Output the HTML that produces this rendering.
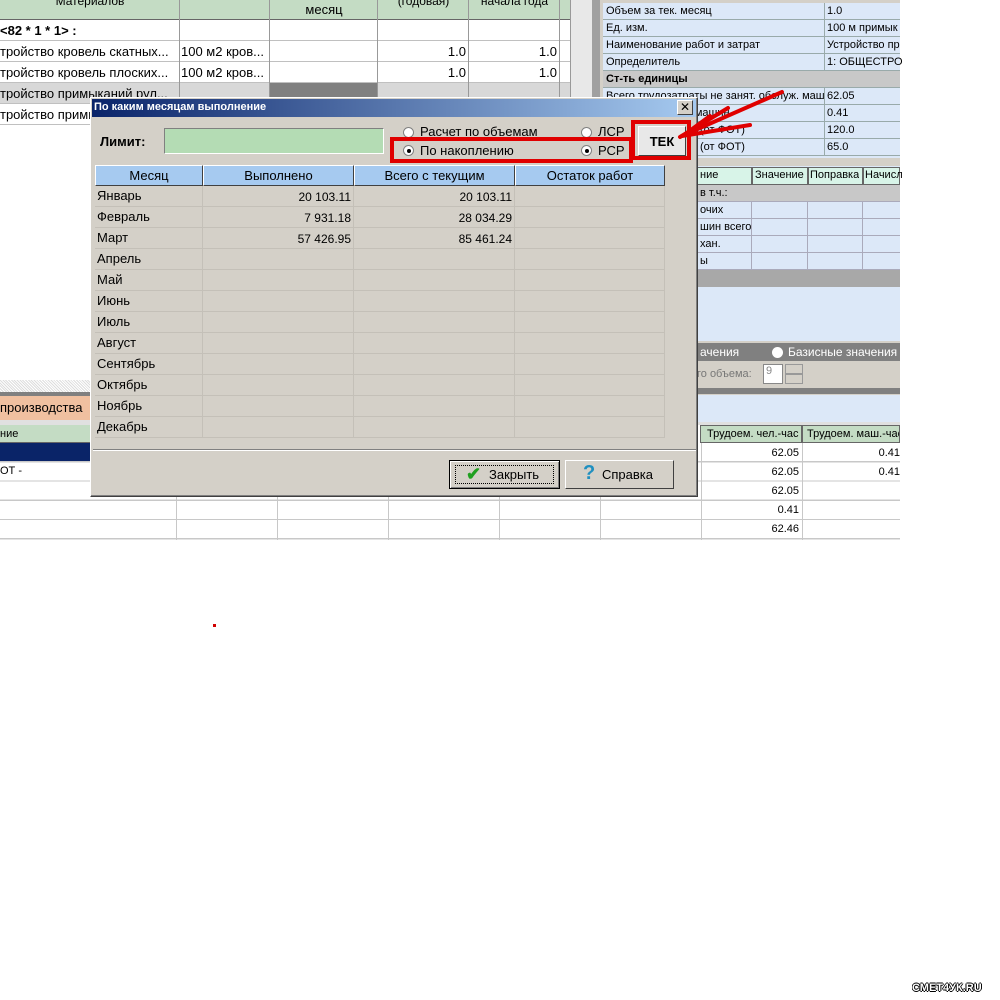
<!DOCTYPE html>
<html><head><meta charset="utf-8"><style>
*{margin:0;padding:0;box-sizing:border-box}
body{width:1000px;height:1000px;background:#fff;position:relative;overflow:hidden;font-family:"Liberation Sans",sans-serif;font-size:12px;color:#000}
.a{position:absolute;white-space:nowrap;overflow:hidden}
.r{text-align:right}
.c{text-align:center}
</style></head><body>

<div class="a" style="left:0;top:0;width:570px;height:20px;background:#c4dcc4;border-bottom:1px solid #666"></div>
<div class="a c" style="left:0;top:-6px;width:180px;">Материалов</div>
<div class="a c" style="left:270px;top:2px;width:108px;font-size:13px">месяц</div>
<div class="a c" style="left:378px;top:-6px;width:91px;">(годовая)</div>
<div class="a c" style="left:469px;top:-6px;width:91px;">начала года</div>
<div class="a" style="left:0;top:83px;width:570px;height:21px;background:#d8d8d8"></div>
<div class="a" style="left:270px;top:83px;width:108px;height:21px;background:#808080"></div>
<div class="a" style="left:0;top:20px;width:570px;height:105px;
background:repeating-linear-gradient(to bottom,transparent 0 20px,#c0c0c0 20px 21px)"></div>
<div class="a" style="left:179px;top:0;width:1px;height:125px;background:#999"></div>
<div class="a" style="left:269px;top:0;width:1px;height:125px;background:#999"></div>
<div class="a" style="left:377px;top:0;width:1px;height:125px;background:#999"></div>
<div class="a" style="left:468px;top:0;width:1px;height:125px;background:#999"></div>
<div class="a" style="left:559px;top:0;width:1px;height:125px;background:#999"></div>
<div class="a" style="left:0;top:23px;font-weight:bold;font-size:13px">&lt;82 * 1 * 1&gt; :</div>
<div class="a" style="left:0;top:44px;width:180px;font-size:13px">тройство кровель скатных...</div>
<div class="a" style="left:181px;top:44px;font-size:13px">100 м2 кров...</div>
<div class="a r" style="left:378px;top:44px;width:88px;font-size:13px">1.0</div>
<div class="a r" style="left:469px;top:44px;width:88px;font-size:13px">1.0</div>
<div class="a" style="left:0;top:65px;width:180px;font-size:13px">тройство кровель плоских...</div>
<div class="a" style="left:181px;top:65px;font-size:13px">100 м2 кров...</div>
<div class="a r" style="left:378px;top:65px;width:88px;font-size:13px">1.0</div>
<div class="a r" style="left:469px;top:65px;width:88px;font-size:13px">1.0</div>
<div class="a" style="left:0;top:86px;width:180px;font-size:13px">тройство примыканий рул...</div>
<div class="a" style="left:0;top:107px;width:180px;font-size:13px">тройство примыканий</div>
<div class="a" style="left:570px;top:0;width:30px;height:395px;background:#e8e8e8;border-left:1px solid #999"></div>
<div class="a" style="left:592px;top:0;width:8px;height:395px;background:#a0a0a0"></div>

<div class="a" style="left:600px;top:0;width:300px;height:395px;background:#d4d0c8"></div>
<div class="a" style="left:603px;top:3px;width:297px;height:155px;background:#dce8f8"></div>
<div class="a" style="left:603px;top:70px;width:297px;height:17px;background:#c8c8c8"></div>
<div class="a" style="left:603px;top:3px;width:297px;height:155px;background:repeating-linear-gradient(to bottom,transparent 0 16px,#9aa 16px 17px)"></div>
<div class="a" style="left:824px;top:3px;width:1px;height:67px;background:#9aa"></div>
<div class="a" style="left:824px;top:87px;width:1px;height:68px;background:#9aa"></div>
<div class="a" style="left:606px;top:5px;font-size:11px">Объем за тек. месяц</div><div class="a" style="left:827px;top:5px;font-size:11px">1.0</div>
<div class="a" style="left:606px;top:22px;font-size:11px">Ед. изм.</div><div class="a" style="left:827px;top:22px;font-size:11px">100 м примык</div>
<div class="a" style="left:606px;top:39px;font-size:11px">Наименование работ и затрат</div><div class="a" style="left:827px;top:39px;font-size:11px">Устройство пр</div>
<div class="a" style="left:606px;top:56px;font-size:11px">Определитель</div><div class="a" style="left:827px;top:56px;font-size:11px">1: ОБЩЕСТРО</div>
<div class="a" style="left:606px;top:73px;font-size:11px;font-weight:bold">Ст-ть единицы</div>
<div class="a" style="left:606px;top:90px;font-size:11px">Всего трудозатраты не занят. обслуж. маш</div><div class="a" style="left:827px;top:90px;font-size:11px">62.05</div>
<div class="a" style="left:606px;top:107px;font-size:11px">Затраты обслуж. машин</div><div class="a" style="left:827px;top:107px;font-size:11px">0.41</div>
<div class="a" style="left:700px;top:124px;font-size:11px">(от ФОТ)</div><div class="a" style="left:827px;top:124px;font-size:11px">120.0</div>
<div class="a" style="left:700px;top:141px;font-size:11px">(от ФОТ)</div><div class="a" style="left:827px;top:141px;font-size:11px">65.0</div>

<div class="a" style="left:697px;top:166px;width:203px;height:175px;background:#dce8f8"></div>
<div class="a" style="left:697px;top:167px;width:55px;height:18px;background:#d8f4e8;border:1px solid #666"></div>
<div class="a" style="left:752px;top:167px;width:56px;height:18px;background:#d8f4e8;border:1px solid #666"></div>
<div class="a" style="left:808px;top:167px;width:55px;height:18px;background:#d8f4e8;border:1px solid #666"></div>
<div class="a" style="left:863px;top:167px;width:37px;height:18px;background:#d8f4e8;border:1px solid #666"></div>
<div class="a" style="left:700px;top:169px;font-size:11px">ние</div>
<div class="a" style="left:755px;top:169px;font-size:11px">Значение</div>
<div class="a" style="left:810px;top:169px;font-size:11px">Поправка</div>
<div class="a" style="left:865px;top:169px;font-size:11px">Начисл</div>
<div class="a" style="left:697px;top:185px;width:203px;height:17px;background:#c8c8c8"></div>
<div class="a" style="left:697px;top:270px;width:203px;height:17px;background:#a8a8a8"></div>
<div class="a" style="left:697px;top:185px;width:203px;height:85px;background:repeating-linear-gradient(to bottom,transparent 0 16px,#aab 16px 17px)"></div>
<div class="a" style="left:751px;top:202px;width:1px;height:68px;background:#aab"></div>
<div class="a" style="left:807px;top:202px;width:1px;height:68px;background:#aab"></div>
<div class="a" style="left:862px;top:202px;width:1px;height:68px;background:#aab"></div>
<div class="a" style="left:700px;top:187px;font-size:11px">в т.ч.:</div>
<div class="a" style="left:700px;top:204px;font-size:11px">очих</div>
<div class="a" style="left:700px;top:221px;font-size:11px">шин всего</div>
<div class="a" style="left:700px;top:238px;font-size:11px">хан.</div>
<div class="a" style="left:700px;top:255px;font-size:11px">ы</div>
<div class="a" style="left:697px;top:343px;width:203px;height:18px;background:#808080"></div>
<div class="a" style="left:700px;top:345px;color:#fff;font-size:12px">ачения</div>
<div class="a" style="left:772px;top:347px;width:11px;height:11px;border-radius:50%;background:#fff"></div>
<div class="a" style="left:788px;top:345px;color:#fff;font-size:12px">Базисные значения</div>
<div class="a" style="left:697px;top:368px;color:#777;font-size:11px">го объема:</div>
<div class="a" style="left:763px;top:364px;width:20px;height:20px;background:#fff;border:1px solid #888;font-size:11px;color:#888;padding-left:2px">9</div>
<div class="a" style="left:785px;top:364px;width:18px;height:10px;background:#d4d0c8;border:1px solid #999"></div>
<div class="a" style="left:785px;top:374px;width:18px;height:10px;background:#d4d0c8;border:1px solid #999"></div>
<div class="a" style="left:600px;top:388px;width:300px;height:6px;background:#808080"></div>

<div class="a" style="left:0;top:380px;width:95px;height:12px;background:repeating-linear-gradient(45deg,#ddd 0 1px,#fff 1px 2px)"></div>
<div class="a" style="left:0;top:392px;width:95px;height:4px;background:#808080"></div>
<div class="a" style="left:0;top:396px;width:95px;height:24px;background:#f0c0a0;font-size:13px;padding-top:4px">производства</div>
<div class="a" style="left:0;top:420px;width:900px;height:5px;background:#e0e0e0"></div>
<div class="a" style="left:697px;top:395px;width:203px;height:27px;background:#dce8f8"></div>
<div class="a" style="left:0;top:425px;width:95px;height:18px;background:#c4dcc4;border-bottom:1px solid #666;font-size:11px;padding-top:3px">ние</div>
<div class="a" style="left:700px;top:425px;width:102px;height:18px;background:#c4dcc4;border:1px solid #666;font-size:11px;padding:2px 0 0 6px">Трудоем. чел.-час</div>
<div class="a" style="left:802px;top:425px;width:98px;height:18px;background:#c4dcc4;border:1px solid #666;font-size:11px;padding:2px 0 0 4px">Трудоем. маш.-час</div>
<div class="a" style="left:0;top:443px;width:95px;height:19px;background:#0a2468"></div>
<div class="a" style="left:0;top:465px;font-size:11px">ОТ -</div>
<div class="a" style="left:0;top:443px;width:900px;height:97px;background:repeating-linear-gradient(to bottom,transparent 0 18px,#c8c8c8 18px 19.3px)"></div>
<div class="a" style="left:176px;top:497px;width:1px;height:43px;background:#c8c8c8"></div>
<div class="a" style="left:277px;top:497px;width:1px;height:43px;background:#c8c8c8"></div>
<div class="a" style="left:388px;top:497px;width:1px;height:43px;background:#c8c8c8"></div>
<div class="a" style="left:499px;top:497px;width:1px;height:43px;background:#c8c8c8"></div>
<div class="a" style="left:600px;top:497px;width:1px;height:43px;background:#c8c8c8"></div>
<div class="a" style="left:701px;top:443px;width:1px;height:97px;background:#c8c8c8"></div>
<div class="a" style="left:802px;top:443px;width:1px;height:97px;background:#c8c8c8"></div>
<div class="a r" style="left:702px;top:447px;width:97px;font-size:11px">62.05</div>
<div class="a r" style="left:702px;top:466px;width:97px;font-size:11px">62.05</div>
<div class="a r" style="left:702px;top:485px;width:97px;font-size:11px">62.05</div>
<div class="a r" style="left:702px;top:504px;width:97px;font-size:11px">0.41</div>
<div class="a r" style="left:702px;top:523px;width:97px;font-size:11px">62.46</div>
<div class="a r" style="left:803px;top:447px;width:97px;font-size:11px">0.41</div>
<div class="a r" style="left:803px;top:466px;width:97px;font-size:11px">0.41</div>

<div class="a" style="left:90px;top:97px;width:608px;height:400px;background:#d4d0c8;border:1px solid;border-color:#fff #404040 #404040 #fff;box-shadow:inset -1px -1px #808080"></div>
<div class="a" style="left:92px;top:99px;width:604px;height:18px;background:linear-gradient(to right,#0a246a,#a6caf0);color:#fff;font-weight:bold;font-size:11px;padding:2px 0 0 2px">По каким месяцам выполнение</div>
<div class="a c" style="left:677px;top:100px;width:16px;height:15px;background:#d4d0c8;border:1px solid;border-color:#fff #404040 #404040 #fff;font-size:12px;line-height:12px">✕</div>
<div class="a" style="left:100px;top:134px;font-weight:bold;font-size:13px">Лимит:</div>
<div class="a" style="left:164px;top:128px;width:220px;height:26px;background:#b4dcb4;border:1px solid;border-color:#808080 #fff #fff #808080"></div>
<div class="a" style="left:403px;top:127px;width:11px;height:11px;border-radius:50%;background:#fff;border:1px solid #808080"></div>
<div class="a" style="left:420px;top:124px;font-size:13px;height:12px">Расчет по объемам</div>
<div class="a" style="left:581px;top:127px;width:11px;height:11px;border-radius:50%;background:#fff;border:1px solid #808080"></div>
<div class="a" style="left:598px;top:124px;font-size:13px;height:12px">ЛСР</div>
<div class="a" style="left:403px;top:145px;width:11px;height:11px;border-radius:50%;background:#fff;border:1px solid #808080"><div style="position:absolute;left:3px;top:3px;width:4px;height:4px;border-radius:50%;background:#000"></div></div>
<div class="a" style="left:420px;top:143px;font-size:13px">По накоплению</div>
<div class="a" style="left:581px;top:145px;width:11px;height:11px;border-radius:50%;background:#fff;border:1px solid #808080"><div style="position:absolute;left:3px;top:3px;width:4px;height:4px;border-radius:50%;background:#000"></div></div>
<div class="a" style="left:598px;top:143px;font-size:13px">РСР</div>
<div class="a c" style="left:638px;top:126px;width:48px;height:30px;background:#e8e8e8;border:1px solid;border-color:#fff #404040 #404040 #fff;font-weight:bold;font-size:13px;padding-top:7px">ТЕК</div>
<div class="a" style="left:390px;top:137px;width:243px;height:26px;border:4px solid #e00000"></div>
<div class="a" style="left:631px;top:120px;width:60px;height:40px;border:4px solid #e00000"></div>

<div class="a" style="left:94px;top:164px;width:572px;height:274px;background:#d4d0c8"></div>
<div class="a" style="left:95px;top:165px;width:570px;height:21px;background:#a6caf0"></div>
<div class="a c" style="left:95px;top:165px;width:108px;height:21px;border:1px solid;border-color:#fff #404040 #404040 #fff;font-size:13px;padding-top:2px">Месяц</div>
<div class="a c" style="left:203px;top:165px;width:151px;height:21px;border:1px solid;border-color:#fff #404040 #404040 #fff;font-size:13px;padding-top:2px">Выполнено</div>
<div class="a c" style="left:354px;top:165px;width:161px;height:21px;border:1px solid;border-color:#fff #404040 #404040 #fff;font-size:13px;padding-top:2px">Всего с текущим</div>
<div class="a c" style="left:515px;top:165px;width:150px;height:21px;border:1px solid;border-color:#fff #404040 #404040 #fff;font-size:13px;padding-top:2px">Остаток работ</div>
<div class="a" style="left:95px;top:186px;width:570px;height:252px;background:repeating-linear-gradient(to bottom,transparent 0 20px,#c4c0b8 20px 21px)"></div>
<div class="a" style="left:202px;top:186px;width:1px;height:252px;background:#c4c0b8"></div>
<div class="a" style="left:353px;top:186px;width:1px;height:252px;background:#c4c0b8"></div>
<div class="a" style="left:514px;top:186px;width:1px;height:252px;background:#c4c0b8"></div>
<div class="a" style="left:664px;top:186px;width:1px;height:252px;background:#c4c0b8"></div>
<div class="a" style="left:97px;top:185px;font-size:13px;line-height:21px">Январь<br>Февраль<br>Март<br>Апрель<br>Май<br>Июнь<br>Июль<br>Август<br>Сентябрь<br>Октябрь<br>Ноябрь<br>Декабрь</div>
<div class="a r" style="left:203px;top:187px;width:148px;font-size:12px;line-height:21px">20 103.11<br>7 931.18<br>57 426.95</div>
<div class="a r" style="left:354px;top:187px;width:158px;font-size:12px;line-height:21px">20 103.11<br>28 034.29<br>85 461.24</div>
<div class="a" style="left:93px;top:449px;width:603px;height:2px;border-top:1px solid #808080;border-bottom:1px solid #fff"></div>
<div class="a" style="left:449px;top:460px;width:111px;height:29px;background:#d4d0c8;border:1px solid #000;box-shadow:inset 1px 1px #fff,inset -1px -1px #808080"></div>
<div class="a" style="left:455px;top:465px;width:99px;height:19px;border:1px dotted #000"></div>
<div class="a" style="left:466px;top:464px;color:#20a020;font-size:18px;font-weight:bold">✔</div>
<div class="a" style="left:489px;top:467px;font-size:13px">Закрыть</div>
<div class="a" style="left:565px;top:460px;width:109px;height:29px;background:#d4d0c8;border:1px solid;border-color:#fff #404040 #404040 #fff"></div>
<div class="a" style="left:583px;top:462px;color:#2090c0;font-size:20px;font-weight:bold">?</div>
<div class="a" style="left:602px;top:467px;font-size:13px">Справка</div>

<svg class="a" style="left:660px;top:80px" width="140" height="70">
<g stroke="#e00000" stroke-width="4" fill="none" stroke-linecap="round">
<line x1="122" y1="12" x2="24" y2="55"/>
<line x1="68" y1="28" x2="20" y2="57"/>
<line x1="90" y1="45" x2="22" y2="56"/>
<line x1="24" y1="55" x2="50" y2="36"/>
</g></svg>

<div class="a" style="left:213px;top:624px;width:3px;height:3px;background:#d00000"></div>
<div class="a" style="left:912px;top:982px;font-weight:bold;font-size:11px;color:#fff;text-shadow:1px 0 #000,-1px 0 #000,0 1px #000,0 -1px #000">СМЕТ4УК.RU</div>
</body></html>
